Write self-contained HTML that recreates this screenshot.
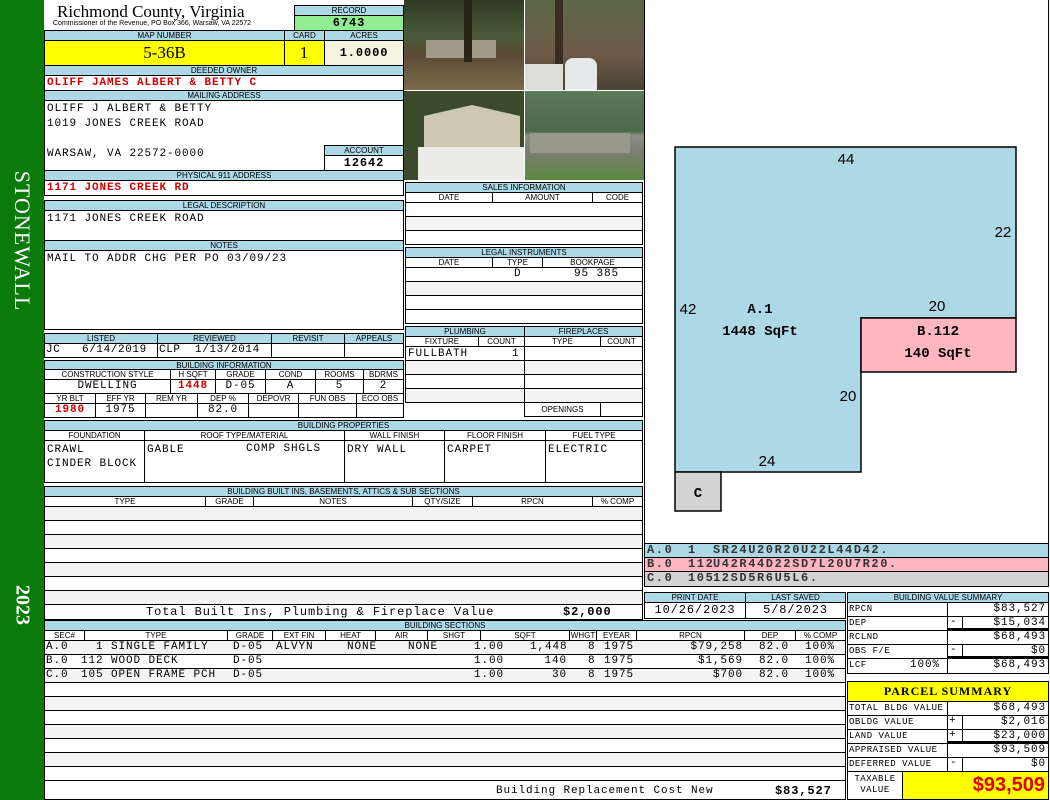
<!DOCTYPE html>
<html><head><meta charset="utf-8"><style>
*{margin:0;padding:0;box-sizing:border-box}
body{width:1050px;height:800px;position:relative;background:#fff;overflow:hidden;font-family:"Liberation Mono",monospace;font-size:11px;color:#000;letter-spacing:0.9px}
div{position:absolute}
.c{border:1px solid #000;background:#fff;white-space:nowrap;overflow:hidden}
.h{border:1px solid #000;background:#add8e6;font:8px/9px "Liberation Sans",sans-serif;text-align:center;white-space:nowrap;overflow:hidden;letter-spacing:0}
.s{border:1px solid #000;background:#fff;font:8px/9px "Liberation Sans",sans-serif;text-align:center;white-space:nowrap;overflow:hidden;letter-spacing:0}
.g{background:#f3f3f3}
.r{color:#d00000;font-weight:bold}
.t{white-space:pre;font-size:11px;line-height:13px}
.sr div{top:0;white-space:pre;line-height:13px}
.sm{font-size:9px;letter-spacing:0.5px}
</style></head><body>
<!-- sidebar -->
<div style="left:0;top:0;width:44px;height:800px;background:#0a7a0a"></div>
<div style="left:22px;top:241px;transform:translate(-50%,-50%) rotate(90deg);color:#fff;font:22px 'Liberation Serif',serif;white-space:nowrap;letter-spacing:1px">STONEWALL</div>
<div style="left:22px;top:605px;transform:translate(-50%,-50%) rotate(90deg);color:#fff;font:bold 20px 'Liberation Serif',serif;white-space:nowrap;letter-spacing:0">2023</div>

<!-- title -->
<div style="left:57px;top:2px;font:17px 'Liberation Serif',serif;white-space:nowrap;letter-spacing:0">Richmond County, Virginia</div>
<div style="left:53px;top:20px;font:7px 'Liberation Sans',sans-serif;white-space:nowrap;letter-spacing:0">Commissioner of the Revenue, PO Box 366, Warsaw, VA 22572</div>
<div class="h" style="left:294px;top:5px;width:110px;height:11px">RECORD</div>
<div class="c" style="left:294px;top:15px;width:110px;height:16px;background:#90ee90;text-align:center;font-weight:bold;font-size:12px;line-height:14px">6743</div>
<div class="h" style="left:44px;top:30px;width:241px;height:11px">MAP NUMBER</div>
<div class="h" style="left:284px;top:30px;width:41px;height:11px">CARD</div>
<div class="h" style="left:324px;top:30px;width:80px;height:11px">ACRES</div>
<div class="c" style="left:44px;top:40px;width:241px;height:26px;background:#ffff00;text-align:center;font:17px/24px 'Liberation Serif',serif;letter-spacing:0">5-36B</div>
<div class="c" style="left:284px;top:40px;width:41px;height:26px;background:#ffff00;text-align:center;font:17px/24px 'Liberation Serif',serif">1</div>
<div class="c" style="left:324px;top:40px;width:80px;height:26px;background:#f4f2e0;text-align:center;font-weight:bold;font-size:12px;line-height:24px">1.0000</div>
<div class="h" style="left:44px;top:65px;width:360px;height:11px">DEEDED OWNER</div>
<div class="c r" style="left:44px;top:75px;width:360px;height:16px;padding-left:2px;line-height:15px">OLIFF JAMES ALBERT &amp; BETTY C</div>
<div class="h" style="left:44px;top:90px;width:360px;height:11px">MAILING ADDRESS</div>
<div class="c t" style="left:44px;top:100px;width:360px;height:71px;padding:1px 2px;line-height:15px">OLIFF J ALBERT &amp; BETTY
1019 JONES CREEK ROAD

WARSAW, VA 22572-0000</div>
<div class="h" style="left:324px;top:145px;width:80px;height:11px">ACCOUNT</div>
<div class="c" style="left:324px;top:155px;width:80px;height:16px;text-align:center;font-weight:bold;font-size:12px;line-height:14px">12642</div>
<div class="h" style="left:44px;top:170px;width:360px;height:11px">PHYSICAL 911 ADDRESS</div>
<div class="c r" style="left:44px;top:180px;width:360px;height:16px;padding-left:2px;line-height:15px">1171 JONES CREEK RD</div>
<div class="h" style="left:44px;top:200px;width:360px;height:11px">LEGAL DESCRIPTION</div>
<div class="c t" style="left:44px;top:210px;width:360px;height:31px;padding:2px 2px">1171 JONES CREEK ROAD</div>
<div class="h" style="left:44px;top:240px;width:360px;height:11px">NOTES</div>
<div class="c t" style="left:44px;top:250px;width:360px;height:80px;padding:2px 2px">MAIL TO ADDR CHG PER PO 03/09/23</div>

<div class="h" style="left:44px;top:333px;width:114px;height:11px">LISTED</div>
<div class="h" style="left:157px;top:333px;width:115px;height:11px">REVIEWED</div>
<div class="h" style="left:271px;top:333px;width:74px;height:11px">REVISIT</div>
<div class="h" style="left:344px;top:333px;width:60px;height:11px">APPEALS</div>
<div class="c t" style="left:44px;top:343px;width:114px;height:15px;padding-left:1px;letter-spacing:0.6px">JC   6/14/2019</div>
<div class="c t" style="left:157px;top:343px;width:115px;height:15px;padding-left:1px;letter-spacing:0.6px">CLP  1/13/2014</div>
<div class="c" style="left:271px;top:343px;width:74px;height:15px"></div>
<div class="c" style="left:344px;top:343px;width:60px;height:15px"></div>

<div class="h" style="left:44px;top:360px;width:360px;height:10px">BUILDING INFORMATION</div>
<div class="s" style="left:44px;top:369px;width:127px;height:11px">CONSTRUCTION STYLE</div>
<div class="s" style="left:170px;top:369px;width:46px;height:11px">H SQFT</div>
<div class="s" style="left:215px;top:369px;width:51px;height:11px">GRADE</div>
<div class="s" style="left:265px;top:369px;width:51px;height:11px">COND</div>
<div class="s" style="left:315px;top:369px;width:49px;height:11px">ROOMS</div>
<div class="s" style="left:363px;top:369px;width:41px;height:11px">BDRMS</div>
<div class="c" style="left:44px;top:379px;width:127px;height:15px;text-align:center">DWELLING</div>
<div class="c r" style="left:170px;top:379px;width:46px;height:15px;text-align:center">1448</div>
<div class="c" style="left:215px;top:379px;width:51px;height:15px;text-align:center">D-05</div>
<div class="c" style="left:265px;top:379px;width:51px;height:15px;text-align:center">A</div>
<div class="c" style="left:315px;top:379px;width:49px;height:15px;text-align:center">5</div>
<div class="c" style="left:363px;top:379px;width:41px;height:15px;text-align:center">2</div>
<div class="s" style="left:44px;top:393px;width:52px;height:11px">YR BLT</div>
<div class="s" style="left:95px;top:393px;width:51px;height:11px">EFF YR</div>
<div class="s" style="left:145px;top:393px;width:53px;height:11px">REM YR</div>
<div class="s" style="left:197px;top:393px;width:52px;height:11px">DEP %</div>
<div class="s" style="left:248px;top:393px;width:51px;height:11px">DEPOVR</div>
<div class="s" style="left:298px;top:393px;width:59px;height:11px">FUN OBS</div>
<div class="s" style="left:356px;top:393px;width:48px;height:11px">ECO OBS</div>
<div class="c r" style="left:44px;top:403px;width:52px;height:15px;text-align:center">1980</div>
<div class="c" style="left:95px;top:403px;width:51px;height:15px;text-align:center">1975</div>
<div class="c" style="left:145px;top:403px;width:53px;height:15px"></div>
<div class="c" style="left:197px;top:403px;width:52px;height:15px;text-align:center">82.0</div>
<div class="c" style="left:248px;top:403px;width:51px;height:15px"></div>
<div class="c" style="left:298px;top:403px;width:59px;height:15px"></div>
<div class="c" style="left:356px;top:403px;width:48px;height:15px"></div>

<!-- photos -->
<div style="left:404px;top:0;width:120px;height:90px;background:linear-gradient(#2f3a22 0,#4a5a3a 40%,#5a4a35 60%,#7a6a48 100%)"><div style="left:22px;top:40px;width:70px;height:18px;background:#a09b88"></div><div style="left:60px;top:0;width:8px;height:62px;background:#2a2418"></div></div>
<div style="left:525px;top:0;width:119px;height:90px;background:linear-gradient(#5c6a48,#6e5a48 60%,#4a4232)"><div style="left:0;top:64px;width:38px;height:26px;background:#dcdcd8"></div><div style="left:40px;top:58px;width:32px;height:32px;background:#e6e8ea;border-radius:8px 8px 0 0"></div><div style="left:30px;top:0;width:8px;height:64px;background:#3a2e22"></div></div>
<div style="left:404px;top:91px;width:120px;height:89px;background:#3a4a2a"><div style="left:20px;top:14px;width:96px;height:44px;background:#cfc8b0;clip-path:polygon(0 25%,50% 0,100% 25%,100% 100%,0 100%)"></div><div style="left:14px;top:56px;width:106px;height:33px;background:#ecece8"></div></div>
<div style="left:525px;top:91px;width:119px;height:89px;background:linear-gradient(#5a7a5a,#4a6a4a 45%,#8a8e86 50%,#7a7e70 70%,#5a8a40 100%)"><div style="left:5px;top:42px;width:100px;height:20px;background:#9a9a8c"></div></div>

<!-- sales -->
<div class="h" style="left:405px;top:182px;width:238px;height:11px">SALES INFORMATION</div>
<div class="s" style="left:405px;top:192px;width:88px;height:11px">DATE</div>
<div class="s" style="left:492px;top:192px;width:101px;height:11px">AMOUNT</div>
<div class="s" style="left:592px;top:192px;width:51px;height:11px">CODE</div>
<div class="c" style="left:405px;top:202px;width:238px;height:15px"></div>
<div class="c g" style="left:405px;top:216px;width:238px;height:15px"></div>
<div class="c" style="left:405px;top:230px;width:238px;height:15px"></div>
<div class="h" style="left:405px;top:247px;width:238px;height:11px">LEGAL INSTRUMENTS</div>
<div class="s" style="left:405px;top:257px;width:88px;height:11px">DATE</div>
<div class="s" style="left:492px;top:257px;width:51px;height:11px">TYPE</div>
<div class="s" style="left:542px;top:257px;width:101px;height:11px">BOOKPAGE</div>
<div class="c" style="left:405px;top:267px;width:238px;height:15px"><div style="left:108px;top:0;line-height:13px">D</div><div style="left:168px;top:0;line-height:13px">95 385</div></div>
<div class="c g" style="left:405px;top:281px;width:238px;height:15px"></div>
<div class="c" style="left:405px;top:295px;width:238px;height:15px"></div>
<div class="c" style="left:405px;top:309px;width:238px;height:15px"></div>

<!-- plumbing -->
<div class="h" style="left:405px;top:326px;width:120px;height:11px">PLUMBING</div>
<div class="h" style="left:524px;top:326px;width:119px;height:11px">FIREPLACES</div>
<div class="s" style="left:405px;top:336px;width:74px;height:11px">FIXTURE</div>
<div class="s" style="left:478px;top:336px;width:47px;height:11px">COUNT</div>
<div class="s" style="left:524px;top:336px;width:77px;height:11px">TYPE</div>
<div class="s" style="left:600px;top:336px;width:43px;height:11px">COUNT</div>
<div class="c" style="left:405px;top:346px;width:120px;height:15px"><div style="left:2px;top:1px;line-height:13px">FULLBATH</div><div style="left:106px;top:1px;line-height:13px">1</div></div>
<div class="c g" style="left:405px;top:360px;width:120px;height:15px"></div>
<div class="c" style="left:405px;top:374px;width:120px;height:15px"></div>
<div class="c g" style="left:405px;top:388px;width:120px;height:15px"></div>
<div class="c" style="left:524px;top:346px;width:119px;height:15px"></div>
<div class="c g" style="left:524px;top:360px;width:119px;height:15px"></div>
<div class="c" style="left:524px;top:374px;width:119px;height:15px"></div>
<div class="c g" style="left:524px;top:388px;width:119px;height:15px"></div>
<div class="s" style="left:524px;top:402px;width:77px;height:15px;line-height:13px">OPENINGS</div>
<div class="c" style="left:600px;top:402px;width:43px;height:15px"></div>

<!-- building props -->
<div class="h" style="left:44px;top:420px;width:599px;height:11px">BUILDING PROPERTIES</div>
<div class="s" style="left:44px;top:430px;width:101px;height:11px">FOUNDATION</div>
<div class="s" style="left:144px;top:430px;width:201px;height:11px">ROOF TYPE/MATERIAL</div>
<div class="s" style="left:344px;top:430px;width:101px;height:11px">WALL FINISH</div>
<div class="s" style="left:444px;top:430px;width:102px;height:11px">FLOOR FINISH</div>
<div class="s" style="left:545px;top:430px;width:98px;height:11px">FUEL TYPE</div>
<div class="c t" style="left:44px;top:440px;width:101px;height:43px;padding:2px 2px;line-height:14px">CRAWL
CINDER BLOCK</div>
<div class="c t" style="left:144px;top:440px;width:201px;height:43px;padding:2px 2px;line-height:14px">GABLE</div>
<div style="left:246px;top:442px;line-height:14px;white-space:pre">COMP SHGLS</div>
<div class="c t" style="left:344px;top:440px;width:101px;height:43px;padding:2px 2px;line-height:14px">DRY WALL</div>
<div class="c t" style="left:444px;top:440px;width:102px;height:43px;padding:2px 2px;line-height:14px">CARPET</div>
<div class="c t" style="left:545px;top:440px;width:98px;height:43px;padding:2px 2px;line-height:14px">ELECTRIC</div>

<!-- built ins -->
<div class="h" style="left:44px;top:486px;width:599px;height:11px">BUILDING BUILT INS, BASEMENTS, ATTICS &amp; SUB SECTIONS</div>
<div class="s" style="left:44px;top:496px;width:162px;height:11px">TYPE</div>
<div class="s" style="left:205px;top:496px;width:49px;height:11px">GRADE</div>
<div class="s" style="left:253px;top:496px;width:160px;height:11px">NOTES</div>
<div class="s" style="left:412px;top:496px;width:61px;height:11px">QTY/SIZE</div>
<div class="s" style="left:472px;top:496px;width:121px;height:11px">RPCN</div>
<div class="s" style="left:592px;top:496px;width:51px;height:11px">% COMP</div>
<div class="c g" style="left:44px;top:506px;width:599px;height:15px"></div>
<div class="c" style="left:44px;top:520px;width:599px;height:15px"></div>
<div class="c g" style="left:44px;top:534px;width:599px;height:15px"></div>
<div class="c" style="left:44px;top:548px;width:599px;height:15px"></div>
<div class="c g" style="left:44px;top:562px;width:599px;height:15px"></div>
<div class="c" style="left:44px;top:576px;width:599px;height:15px"></div>
<div class="c g" style="left:44px;top:590px;width:599px;height:15px"></div>
<div class="c" style="left:44px;top:604px;width:599px;height:16px"><div style="left:101px;top:0;line-height:14px;font-size:12px;white-space:pre">Total Built Ins, Plumbing &amp; Fireplace Value</div><div style="left:518px;top:0;line-height:14px;font-size:12px;font-weight:bold">$2,000</div></div>

<!-- building sections -->
<div class="h" style="left:44px;top:620px;width:802px;height:11px">BUILDING SECTIONS</div>
<div class="s" style="left:44px;top:630px;width:41px;height:11px">SEC#</div>
<div class="s" style="left:84px;top:630px;width:144px;height:11px">TYPE</div>
<div class="s" style="left:227px;top:630px;width:46px;height:11px">GRADE</div>
<div class="s" style="left:272px;top:630px;width:54px;height:11px">EXT FIN</div>
<div class="s" style="left:325px;top:630px;width:51px;height:11px">HEAT</div>
<div class="s" style="left:375px;top:630px;width:53px;height:11px">AIR</div>
<div class="s" style="left:427px;top:630px;width:54px;height:11px">SHGT</div>
<div class="s" style="left:480px;top:630px;width:90px;height:11px">SQFT</div>
<div class="s" style="left:569px;top:630px;width:28px;height:11px">WHGT</div>
<div class="s" style="left:596px;top:630px;width:41px;height:11px">EYEAR</div>
<div class="s" style="left:636px;top:630px;width:109px;height:11px">RPCN</div>
<div class="s" style="left:744px;top:630px;width:52px;height:11px">DEP</div>
<div class="s" style="left:795px;top:630px;width:51px;height:11px">% COMP</div>
<div class="c sr" style="left:44px;top:640px;width:802px;height:15px;background:#f3f3f3"><div style="left:1px">A.0</div><div style="left:51px">1 SINGLE FAMILY</div><div style="left:188px">D-05</div><div style="left:231px">ALVYN</div><div style="left:302px">NONE</div><div style="left:363px">NONE</div><div style="left:429px">1.00</div><div style="left:485px;width:37px;text-align:right">1,448</div><div style="left:543px">8</div><div style="left:559px">1975</div><div style="left:640px;width:58px;text-align:right">$79,258</div><div style="left:714px">82.0</div><div style="left:755px;width:35px;text-align:right">100%</div></div>
<div class="c sr" style="left:44px;top:654px;width:802px;height:15px"><div style="left:1px">B.0</div><div style="left:36px">112 WOOD DECK</div><div style="left:188px">D-05</div><div style="left:429px">1.00</div><div style="left:485px;width:37px;text-align:right">140</div><div style="left:543px">8</div><div style="left:559px">1975</div><div style="left:640px;width:58px;text-align:right">$1,569</div><div style="left:714px">82.0</div><div style="left:755px;width:35px;text-align:right">100%</div></div>
<div class="c sr" style="left:44px;top:668px;width:802px;height:15px;background:#f3f3f3"><div style="left:1px">C.0</div><div style="left:36px">105 OPEN FRAME PCH</div><div style="left:188px">D-05</div><div style="left:429px">1.00</div><div style="left:485px;width:37px;text-align:right">30</div><div style="left:543px">8</div><div style="left:559px">1975</div><div style="left:640px;width:58px;text-align:right">$700</div><div style="left:714px">82.0</div><div style="left:755px;width:35px;text-align:right">100%</div></div>
<div class="c" style="left:44px;top:682px;width:802px;height:15px"></div>
<div class="c g" style="left:44px;top:696px;width:802px;height:15px"></div>
<div class="c" style="left:44px;top:710px;width:802px;height:15px"></div>
<div class="c g" style="left:44px;top:724px;width:802px;height:15px"></div>
<div class="c" style="left:44px;top:738px;width:802px;height:15px"></div>
<div class="c g" style="left:44px;top:752px;width:802px;height:15px"></div>
<div class="c" style="left:44px;top:766px;width:802px;height:15px"></div>
<div class="c" style="left:44px;top:780px;width:802px;height:20px"><div style="left:451px;top:3px;line-height:14px;white-space:pre">Building Replacement Cost New</div><div style="left:730px;top:3px;line-height:14px;font-weight:bold;font-size:12px">$83,527</div></div>

<!-- sketch -->
<div style="left:644px;top:0;width:405px;height:544px;border:1px solid #000;border-top:0"></div>
<svg style="position:absolute;left:0;top:0;letter-spacing:0" width="1050" height="800">
<polygon points="675,147 1016,147 1016,318 861,318 861,472 675,472" fill="#add8e6" stroke="#000" stroke-width="1.5"/>
<rect x="861" y="318" width="155" height="54" fill="#ffb6c1" stroke="#000" stroke-width="1.5"/>
<rect x="675" y="472" width="46" height="39" fill="#d3d3d3" stroke="#000" stroke-width="1.5"/>
<g font-family="Liberation Sans, sans-serif" font-size="15">
<text x="846" y="164" text-anchor="middle">44</text>
<text x="1003" y="237" text-anchor="middle">22</text>
<text x="937" y="311" text-anchor="middle">20</text>
<text x="688" y="314" text-anchor="middle">42</text>
<text x="848" y="401" text-anchor="middle">20</text>
<text x="767" y="466" text-anchor="middle">24</text>
</g>
<g font-family="Liberation Mono, monospace" font-size="14" font-weight="bold" text-anchor="middle">
<text x="760" y="313">A.1</text>
<text x="760" y="335">1448 SqFt</text>
<text x="938" y="335">B.112</text>
<text x="938" y="357">140 SqFt</text>
<text x="698" y="497">C</text>
</g>
</svg>
<div class="c sr" style="left:644px;top:543px;width:405px;height:15px;background:#add8e6;font-size:12px;font-weight:bold;color:#333;letter-spacing:1.6px"><div style="left:2px">A.0</div><div style="left:43px">1</div><div style="left:68px">SR24U20R20U22L44D42.</div></div>
<div class="c sr" style="left:644px;top:557px;width:405px;height:15px;background:#ffb6c1;font-size:12px;font-weight:bold;color:#333;letter-spacing:1.6px"><div style="left:2px">B.0</div><div style="left:43px">112</div><div style="left:68px">U42R44D22SD7L20U7R20.</div></div>
<div class="c sr" style="left:644px;top:571px;width:405px;height:16px;background:#d3d3d3;font-size:12px;font-weight:bold;color:#333;letter-spacing:1.6px"><div style="left:2px">C.0</div><div style="left:43px">105</div><div style="left:68px">12SD5R6U5L6.</div></div>

<div class="h" style="left:644px;top:592px;width:102px;height:11px">PRINT DATE</div>
<div class="h" style="left:745px;top:592px;width:101px;height:11px">LAST SAVED</div>
<div class="c" style="left:644px;top:602px;width:102px;height:17px;text-align:center;font-size:12px;line-height:15px">10/26/2023</div>
<div class="c" style="left:745px;top:602px;width:101px;height:17px;text-align:center;font-size:12px;line-height:15px">5/8/2023</div>

<!-- value summary -->
<div class="h" style="left:847px;top:592px;width:202px;height:11px">BUILDING VALUE SUMMARY</div>
<div class="c t sm" style="left:847px;top:602px;width:101px;height:15px;padding-left:1px">RPCN</div>
<div class="c t" style="left:947px;top:602px;width:102px;height:15px;text-align:right;padding-right:2px">$83,527</div>
<div class="c t sm" style="left:847px;top:616px;width:101px;height:15px;padding-left:1px">DEP</div>
<div class="c t" style="left:947px;top:616px;width:102px;height:15px;text-align:right;padding-right:2px;border-bottom:3px solid #000">$15,034</div>
<div class="c" style="left:947px;top:616px;width:16px;height:13px;border-width:0 1px 0 0;background:transparent;padding-left:3px;line-height:12px">-</div>
<div class="c t sm" style="left:847px;top:630px;width:101px;height:15px;padding-left:1px">RCLND</div>
<div class="c t" style="left:947px;top:630px;width:102px;height:15px;text-align:right;padding-right:2px">$68,493</div>
<div class="c t sm" style="left:847px;top:644px;width:101px;height:15px;padding-left:1px">OBS F/E</div>
<div class="c t" style="left:947px;top:644px;width:102px;height:15px;text-align:right;padding-right:2px;border-bottom:3px solid #000">$0</div>
<div class="c" style="left:947px;top:644px;width:16px;height:13px;border-width:0 1px 0 0;background:transparent;padding-left:3px;line-height:12px">-</div>
<div class="c t sm" style="left:847px;top:658px;width:101px;height:16px;padding-left:1px">LCF</div>
<div style="left:910px;top:659px;line-height:13px">100%</div>
<div class="c t" style="left:947px;top:658px;width:102px;height:16px;text-align:right;padding-right:2px">$68,493</div>

<!-- parcel summary -->
<div class="c" style="left:847px;top:681px;width:202px;height:21px;background:#ffff00;text-align:center;font:bold 12px/19px 'Liberation Serif',serif;letter-spacing:1px">PARCEL SUMMARY</div>
<div class="c t sm" style="left:847px;top:701px;width:101px;height:15px;padding-left:1px">TOTAL BLDG VALUE</div>
<div class="c t" style="left:947px;top:701px;width:102px;height:15px;text-align:right;padding-right:2px">$68,493</div>
<div class="c t sm" style="left:847px;top:715px;width:101px;height:15px;padding-left:1px">OBLDG VALUE</div>
<div class="c t" style="left:947px;top:715px;width:102px;height:15px;text-align:right;padding-right:2px">$2,016</div>
<div class="c" style="left:947px;top:715px;width:16px;height:14px;border-width:0 1px 0 0;background:transparent;padding-left:2px;line-height:13px">+</div>
<div class="c t sm" style="left:847px;top:729px;width:101px;height:15px;padding-left:1px">LAND VALUE</div>
<div class="c t" style="left:947px;top:729px;width:102px;height:15px;text-align:right;padding-right:2px;border-bottom:3px solid #000">$23,000</div>
<div class="c" style="left:947px;top:729px;width:16px;height:12px;border-width:0 1px 0 0;background:transparent;padding-left:2px;line-height:12px">+</div>
<div class="c t sm" style="left:847px;top:743px;width:101px;height:15px;padding-left:1px">APPRAISED VALUE</div>
<div class="c t" style="left:947px;top:743px;width:102px;height:15px;text-align:right;padding-right:2px">$93,509</div>
<div class="c t sm" style="left:847px;top:757px;width:101px;height:15px;padding-left:1px">DEFERRED VALUE</div>
<div class="c t" style="left:947px;top:757px;width:102px;height:15px;text-align:right;padding-right:2px">$0</div>
<div class="c" style="left:947px;top:757px;width:16px;height:14px;border-width:0 1px 0 0;background:transparent;padding-left:3px;line-height:13px">-</div>
<div class="c t sm" style="left:847px;top:771px;width:56px;height:29px;line-height:11px;text-align:center;padding-top:2px">TAXABLE
VALUE</div>
<div class="c" style="left:902px;top:771px;width:147px;height:29px;background:#ffff00;text-align:right;padding-right:3px;color:#e00000;font:bold 20px/27px 'Liberation Sans',sans-serif;letter-spacing:0">$93,509</div>
</body></html>
